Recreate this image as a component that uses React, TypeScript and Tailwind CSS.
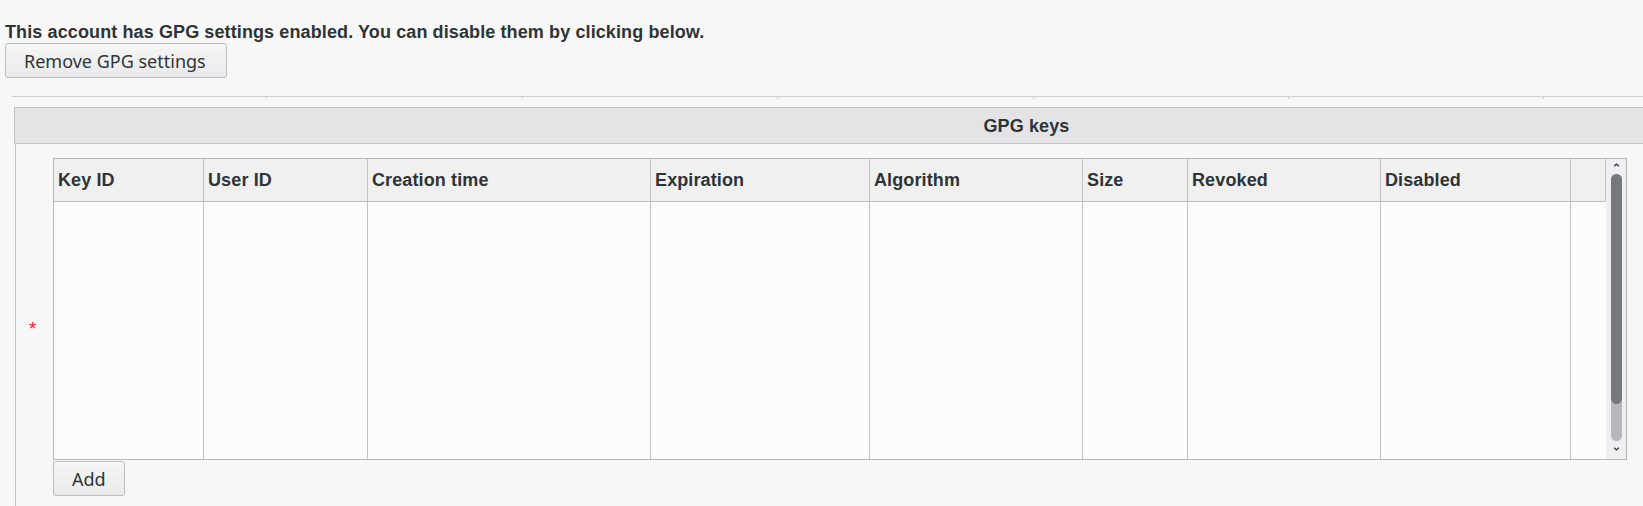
import { ChevronDown, ChevronUp } from "lucide-react";

const columns = [
  { label: "Key ID", width: "w-[150px]" },
  { label: "User ID", width: "w-[164px]" },
  { label: "Creation time", width: "w-[283px]" },
  { label: "Expiration", width: "w-[219px]" },
  { label: "Algorithm", width: "w-[213px]" },
  { label: "Size", width: "w-[105px]" },
  { label: "Revoked", width: "w-[193px]" },
  { label: "Disabled", width: "w-[190px]" },
  { label: "", width: "w-[35px]" },
];

function GtkButton({ text, className = "" }: { text: string; className?: string }) {
  return (
    <button
      type="button"
      className={`h-[35px] px-[18px] rounded-[3px] border border-[#bcbcbc] bg-linear-to-b from-[#f6f6f6] to-[#eaeaec] font-['Noto_Sans',sans-serif] text-[18px] leading-[24px] text-[#2e3436] ${className}`}
    >
      {text}
    </button>
  );
}

function Scrollbar() {
  return (
    <div className="w-[20px] h-full bg-[#efeff1] flex flex-col items-center">
      <ChevronUp className="mt-[2px] w-[11px] h-[8px] text-[#2e3436]" strokeWidth={3.5} />
      <div className="mt-[5px] w-[11px] h-[267px] rounded-full bg-[#b8b8ba] flex flex-col">
        <div className="h-[230px] rounded-full bg-[#76787c]" />
      </div>
      <ChevronDown className="mt-[4px] w-[11px] h-[8px] text-[#2e3436]" strokeWidth={3.5} />
    </div>
  );
}

function KeysTable() {
  return (
    <div className="w-[1574px] h-[302px] border border-[#b6b6b6] flex">
      <div className="w-[1552px] flex flex-col bg-[#fcfcfc]">
        <div className="h-[43px] flex border-b border-[#bdbdbd] bg-[#f0f0f0]">
          {columns.map((col, i) => (
            <div
              key={i}
              className={`${col.width} h-full flex items-center pl-[4px] border-r border-[#c2c2c2] font-['Liberation_Sans',Arial,sans-serif] font-bold text-[18px] leading-[21px] tracking-[0.12px] text-[#2e3436]`}
            >
              {col.label}
            </div>
          ))}
        </div>
        <div className="flex-1 flex">
          {columns.map((col, i) => (
            <div
              key={i}
              className={`${col.width} h-full ${i < columns.length - 1 ? "border-r border-[#c2c2c2]" : ""}`}
            />
          ))}
        </div>
      </div>
      <Scrollbar />
    </div>
  );
}

export default function App() {
  const ticks = Array.from({ length: 8 });

  return (
    <div className="h-screen w-full overflow-hidden bg-[#f7f7f7] text-[#2e3436]">
      <div className="pt-[22px] pl-[5px]">
        <p className="font-['Liberation_Sans',Arial,sans-serif] font-bold text-[18px] leading-[21px] tracking-[0.11px]">
          This account has GPG settings enabled. You can disable them by clicking below.
        </p>
        <GtkButton text="Remove GPG settings" className="w-[222px] text-left" />
      </div>

      {/* hidden grid row */}
      <div className="mt-[18px] ml-[12px] border-t border-[#cdcdcd] flex">
        {ticks.map((_, i) => (
          <div key={i} className="w-[255.4px] h-[2px] shrink-0 border-r border-[#f1c2c2]" />
        ))}
      </div>

      <div className="mt-[8px] ml-[14px] w-[2025px] h-[37px] border border-[#c4c4c4] bg-[#e4e4e6] pt-[8px] text-center font-['Liberation_Sans',Arial,sans-serif] font-bold text-[18px] leading-[21px] tracking-[0.12px]">
        GPG keys
      </div>

      <div className="ml-[15px] border-l border-[#c4c4c4] h-[400px] pt-[14px] flex items-start">
        <div className="w-[37px] h-[338px] pt-[3px] pl-[13px] flex items-center">
          <span className="font-['Liberation_Sans',Arial,sans-serif] text-[19px] leading-[21px] text-[#ee1c1c]">*</span>
        </div>
        <div className="flex flex-col items-start">
          <KeysTable />
          <div className="mt-[1px]">
            <GtkButton text="Add" />
          </div>
        </div>
      </div>
    </div>
  );
}
